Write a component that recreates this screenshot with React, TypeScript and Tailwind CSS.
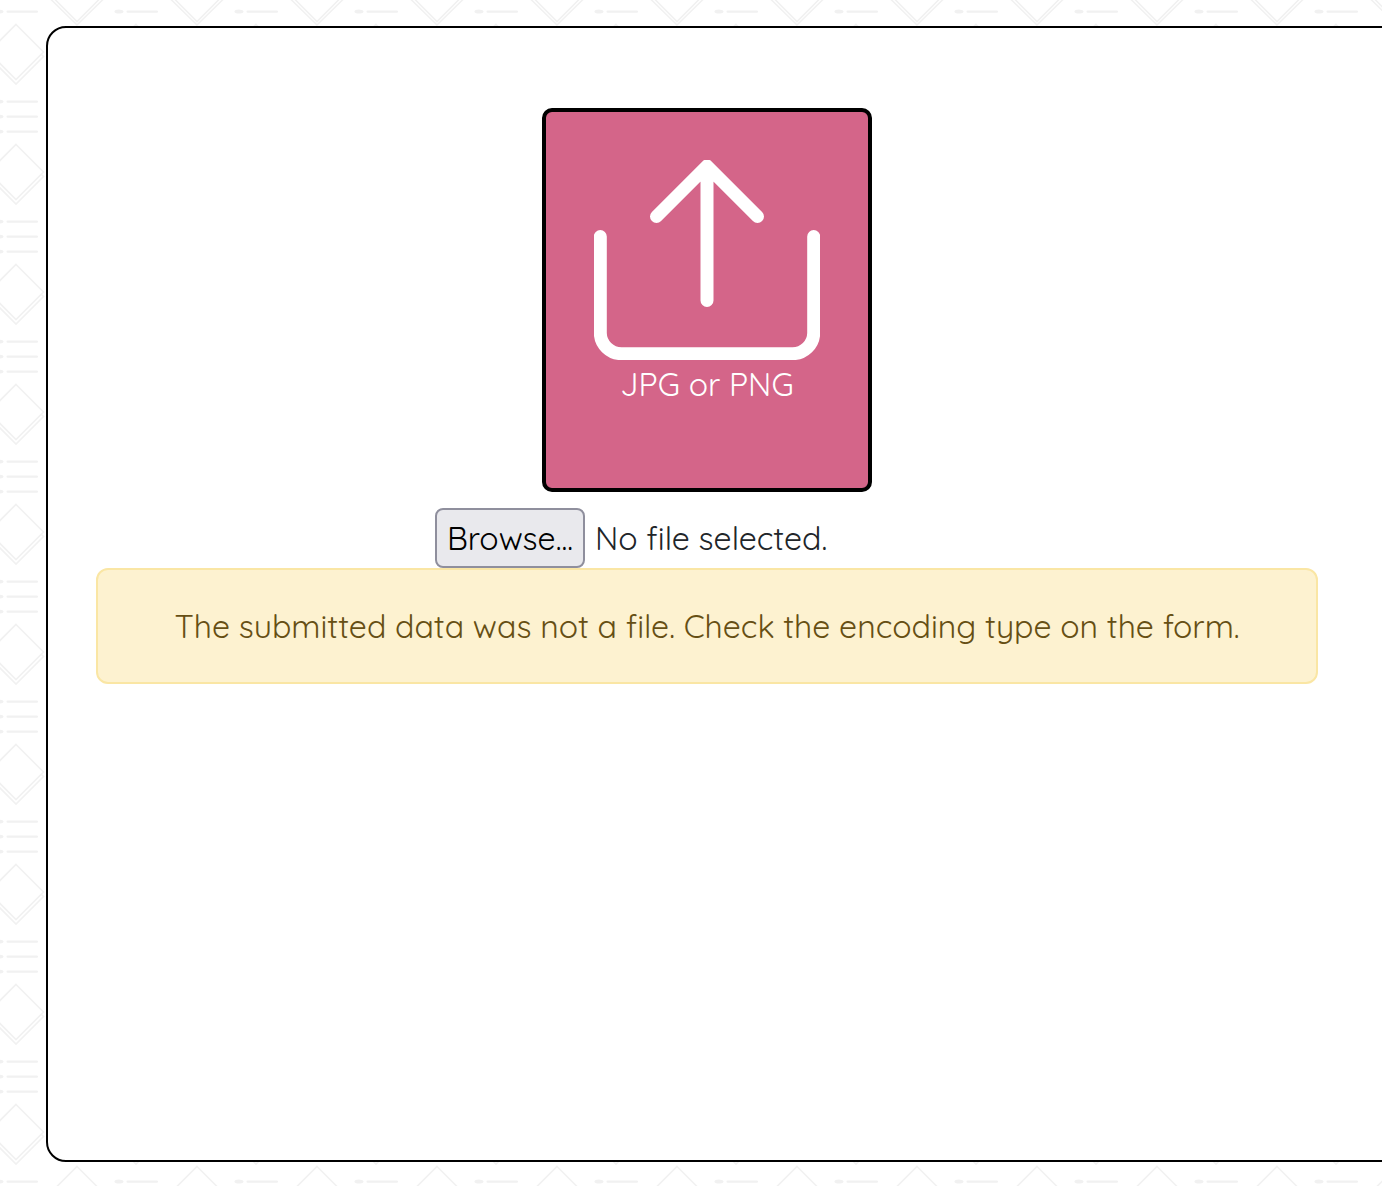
function Backdrop() {
  return (
    <svg className="absolute inset-0 -z-10 h-full w-full" aria-hidden="true">
      <defs>
        <pattern id="motif" width="120" height="120" patternUnits="userSpaceOnUse">
          <g fill="none" stroke="#f1f1f1" strokeWidth="1.6">
            <path d="M16 24.500 43.500 52 16 79.500-11.500 52ZM41.500 54.500 43.500 56.500 16 84-11.500 56.500-9.500 54.500" />
            <path d="M136 24.500 108.500 52 136 79.500M110.500 54.500 108.500 56.500 136 84" />
            <path d="M77 86.500 104.500 114 77 141.500 49.500 114ZM102.500 116 104.500 118 77 145.500 49.500 118 51.500 116" />
            <path d="M77-33.500 104.500-6 77 21.500 49.500-6ZM102.500-4 104.500-2 77 25 49.500-2 51.500-4" />
          </g>
          {[11.6, 101.6, 116.6].map((y) => (
            <g key={y} fill="#f1f1f1">
              <rect x="6.500" y={y - 1.1} width="31.500" height="2.300" rx="1.100" />
              <ellipse cx="119" cy={y} rx="4.500" ry="2" />
              <ellipse cx="-1" cy={y} rx="4.500" ry="2" />
            </g>
          ))}
        </pattern>
      </defs>
      <rect width="100%" height="100%" fill="url(#motif)" />
    </svg>
  );
}

function UploadIcon() {
  return (
    <svg
      className="h-[200px] w-[226px] shrink-0"
      viewBox="0 0 226 200"
      fill="none"
      stroke="white"
      strokeWidth="13"
      strokeLinecap="round"
    >
      <path d="M6.300 76.500V173A21.500 21 0 0 0 27.500 193.700H198.500A21.500 21 0 0 0 219.700 173V76.500" />
      <path d="M113 140.500V8M62.500 56.500 113 6 163.500 56.500" strokeLinejoin="round" />
    </svg>
  );
}

export default function App() {
  return (
    <div className="relative isolate h-[1186px] overflow-hidden bg-white pt-[26px] pl-[46px] font-['Quicksand','Lato',sans-serif] text-[32px] leading-[48px] font-normal text-[#212529] antialiased">
      <Backdrop />
      <main className="h-[1136px] w-[1400px] rounded-[20px] border-2 border-black bg-white pt-20 pl-12">
        <div className="flex w-[1222px] flex-col items-center">
          <label className="flex h-[384px] w-[330px] cursor-pointer flex-col items-center rounded-[10px] border-4 border-black bg-[#d46589] pt-12 text-white">
            <UploadIcon />
            <span className="whitespace-nowrap">JPG or PNG</span>
          </label>
          <div className="mt-4 flex h-[60px] w-[544px] items-center gap-2.5">
            <button className="flex h-[60px] w-[150px] shrink-0 items-center justify-center rounded-lg border-2 border-[#8f8f9d] bg-[#e9e9ed] whitespace-nowrap text-black">
              Browse...
            </button>
            <span className="whitespace-nowrap">No file selected.</span>
          </div>
          <div className="flex h-[116px] w-full items-center justify-center rounded-xl border-2 border-[#fae6a4] bg-[#fdf2d0] whitespace-nowrap text-[#664f14]">
            The submitted data was not a file. Check the encoding type on the form.
          </div>
        </div>
      </main>
    </div>
  );
}
